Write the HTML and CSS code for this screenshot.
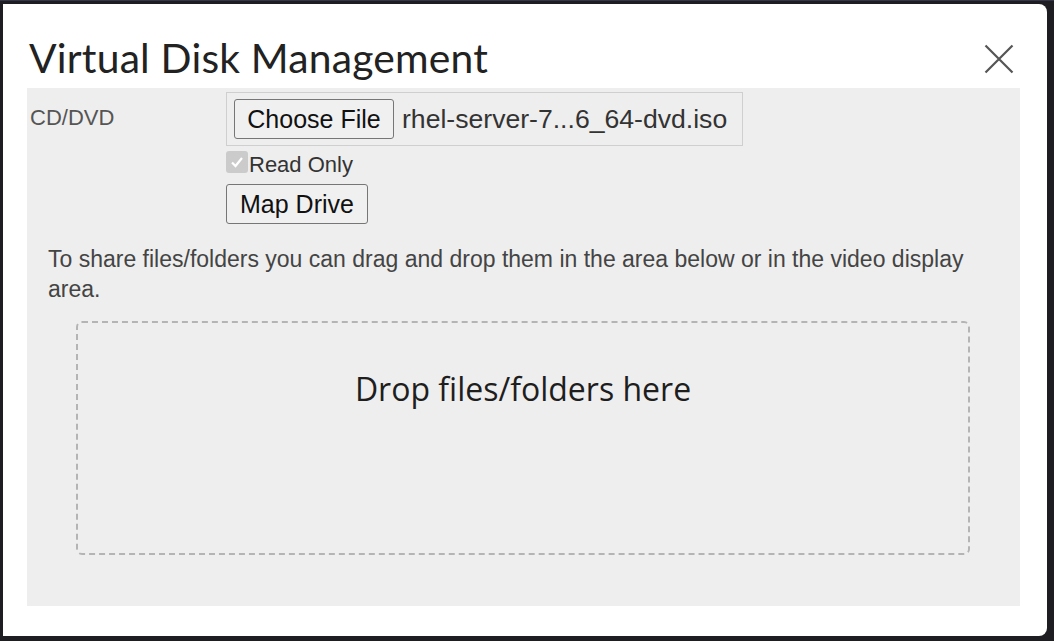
FILE: index.html
```html
<!DOCTYPE html>
<html>
<head>
<meta charset="utf-8">
<link rel="stylesheet" href="styles.css">
</head>
<body>
<div class="dialog">
  <div class="header">
    <h1 class="title">Virtual Disk Management</h1>
    <button class="close" aria-label="Close">
      <svg width="30" height="30" viewBox="0 0 30 30"><path d="M1.5 1.5 L28.5 28.5 M28.5 1.5 L1.5 28.5" stroke="#555" stroke-width="2.2" fill="none"/></svg>
    </button>
  </div>
  <div class="panel">
    <div class="row">
      <div class="label">CD/DVD</div>
      <div class="controls">
        <div class="filebox">
          <span class="btn choose">Choose File</span>
          <span class="filename">rhel-server-7...6_64-dvd.iso</span>
        </div>
        <label class="check">
          <span class="box"><svg width="16" height="16" viewBox="0 0 16 16"><path d="M3 8.5 L6.5 12 L13 4" stroke="#fff" stroke-width="2.2" fill="none"/></svg></span>
          <span class="checktext">Read Only</span>
        </label>
        <span class="btn map">Map Drive</span>
      </div>
    </div>
    <p class="desc">To share files/folders you can drag and drop them in the area below or in the video display area.</p>
    <div class="dropzone">Drop files/folders here</div>
  </div>
</div>
</body>
</html>
```

FILE: styles.css
```css
html, body {
  margin: 0;
  padding: 0;
  background: #1e1e22;
}
body {
  width: 1054px;
  height: 641px;
  overflow: hidden;
  padding: 3px 7px 5px 3px;
  box-sizing: border-box;
  border-top: 1px solid #34344a;
}
.dialog {
  background: #fff;
  width: 1044px;
  height: 632px;
  border-radius: 0 8px 8px 0;
  box-sizing: border-box;
  padding: 0 27px 30px 24px;
  display: flex;
  flex-direction: column;
}
.header {
  height: 84px;
  display: flex;
  justify-content: space-between;
  align-items: flex-start;
}
.title {
  margin: 26px 0 0 2px;
  font-family: "Lato", "Liberation Sans", sans-serif;
  font-weight: 400;
  font-size: 40.8px;
  line-height: 56px;
  color: #222;
  letter-spacing: 0.2px;
}
.close {
  margin: 40px 6px 0 0;
  padding: 0;
  border: 0;
  background: none;
  width: 30px;
  height: 30px;
}
.panel {
  flex: 1;
  background: #eeeeee;
  font-family: "Liberation Sans", Arial, sans-serif;
  display: flex;
  flex-direction: column;
}
.row {
  display: flex;
}
.label {
  width: 196px;
  padding-left: 3px;
  padding-top: 17px;
  font-size: 22px;
  color: #555;
}
.controls {
  display: flex;
  flex-direction: column;
  align-items: flex-start;
  padding-top: 4px;
}
.filebox {
  width: 517px;
  height: 54px;
  box-sizing: border-box;
  border: 1px solid #cfcfcf;
  display: flex;
  align-items: center;
  padding-left: 7px;
}
.btn {
  display: inline-flex;
  align-items: center;
  justify-content: center;
  box-sizing: border-box;
  height: 40px;
  border: 1px solid #767676;
  border-radius: 3px;
  background: #f0f0f0;
  font-size: 25px;
  color: #111;
}
.choose {
  width: 160px;
}
.filename {
  margin-left: 8px;
  font-size: 26.6px;
  color: #333;
}
.check {
  display: flex;
  align-items: center;
  height: 34px;
  margin-top: 2px;
}
.box {
  width: 22px;
  height: 22px;
  border-radius: 3px;
  background: #cbcbcb;
  display: flex;
  align-items: center;
  justify-content: center;
  margin-top: -6px;
}
.checktext {
  font-size: 22px;
  color: #333;
  margin-left: 1px;
}
.map {
  width: 142px;
  margin-top: 2px;
}
.desc {
  margin: 20px 40px 0 21px;
  font-size: 23px;
  line-height: 30px;
  color: #444;
}
.dropzone {
  margin: 17px 50px 0 49px;
  height: 234px;
  box-sizing: border-box;
  border: 2px dashed #b4b4b4;
  border-radius: 6px;
  text-align: center;
  padding-top: 44px;
  font-family: "Open Sans", "Liberation Sans", sans-serif;
  font-size: 32px;
  color: #1e1e1e;
}
```
